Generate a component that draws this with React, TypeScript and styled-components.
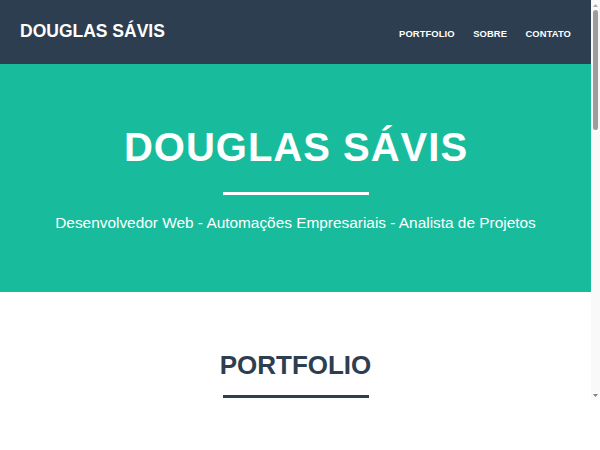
import React from "react";
import styled, { createGlobalStyle } from "styled-components";

const Global = createGlobalStyle`
  html, body { margin: 0; padding: 0; background: #ffffff; }
  body { font-family: "Liberation Sans", Arial, sans-serif; }
  * { box-sizing: border-box; }
`;

const Frame = styled.div`
  display: flex;
  height: 400px;
`;

const Page = styled.div`
  flex: 1;
  min-width: 0;
  overflow: hidden;
  background: #ffffff;
`;

const ScrollBar = styled.div`
  width: 9px;
  flex-shrink: 0;
  background: #f9f9f9;
  display: flex;
  flex-direction: column;
  align-items: center;
`;

const ScrollButton = styled.div`
  height: 10px;
  width: 100%;
  display: flex;
  align-items: center;
  justify-content: center;
  flex-shrink: 0;
`;

const ScrollTrack = styled.div`
  flex: 1;
  width: 100%;
  display: flex;
  justify-content: center;
`;

const Thumb = styled.div`
  width: 5px;
  height: 120px;
  border-radius: 3px;
  background: #9c9c9c;
`;

const NavBar = styled.nav`
  height: 64px;
  background: #2c3e50;
  display: flex;
  align-items: center;
  justify-content: space-between;
  padding: 0 20px;
`;

const Brand = styled.a`
  color: #ffffff;
  font-size: 17.5px;
  line-height: 17.5px;
  font-weight: 700;
  text-decoration: none;
`;

const NavList = styled.ul`
  display: flex;
  gap: 18.5px;
  list-style: none;
  margin: 0;
  padding: 0;
`;

const NavLink = styled.a`
  color: #ffffff;
  font-size: 9.4px;
  line-height: 10px;
  font-weight: 700;
  letter-spacing: 0.1px;
  text-decoration: none;
`;

const Hero = styled.header`
  background: #18bc9c;
  color: #ffffff;
  height: 228px;
  padding-top: 62.5px;
  display: flex;
  flex-direction: column;
  align-items: center;
  text-align: center;
`;

const HeroTitle = styled.h1`
  margin: 0;
  font-size: 40px;
  line-height: 40px;
  font-weight: 700;
  letter-spacing: 1px;
  padding-left: 1px;
`;

const Divider = styled.hr<{ $color: string }>`
  width: 146px;
  height: 3px;
  margin: 0;
  border: none;
  background: ${(p) => p.$color};
  flex-shrink: 0;
`;

const HeroDivider = styled(Divider)`
  margin-top: 25.5px;
`;

const Subtitle = styled.p`
  margin: 20px 0 0;
  font-size: 15.4px;
  line-height: 15.4px;
  font-weight: 400;
`;

const Section = styled.section`
  background: #ffffff;
  color: #2c3e50;
  padding: 59.5px 20px 60px;
  display: flex;
  flex-direction: column;
  align-items: center;
`;

const SectionTitle = styled.h2`
  margin: 0;
  font-size: 26px;
  line-height: 26px;
  font-weight: 700;
`;

const SectionDivider = styled(Divider)`
  margin-top: 17.5px;
`;

const Grid = styled.div`
  margin-top: 40px;
  width: 100%;
  display: grid;
  grid-template-columns: repeat(3, 1fr);
  gap: 20px;
`;

const Card = styled.div`
  height: 140px;
  background: #ecf0f1;
  border-radius: 4px;
`;

const Arrow = ({ up, color }: { up?: boolean; color: string }) => (
  <svg width="5" height="3" viewBox="0 0 5 3">
    <polygon points={up ? "2.5,0 5,3 0,3" : "0,0 5,0 2.5,3"} fill={color} />
  </svg>
);

export default function App() {
  return (
    <>
      <Global />
      <Frame>
        <Page>
          <NavBar>
            <Brand href="#">DOUGLAS SÁVIS</Brand>
            <NavList>
              <li><NavLink href="#portfolio">PORTFOLIO</NavLink></li>
              <li><NavLink href="#sobre">SOBRE</NavLink></li>
              <li><NavLink href="#contato">CONTATO</NavLink></li>
            </NavList>
          </NavBar>
          <Hero>
            <HeroTitle>DOUGLAS SÁVIS</HeroTitle>
            <HeroDivider $color="#ffffff" />
            <Subtitle>Desenvolvedor Web - Automações Empresariais - Analista de Projetos</Subtitle>
          </Hero>
          <Section id="portfolio">
            <SectionTitle>PORTFOLIO</SectionTitle>
            <SectionDivider $color="#2c3e50" />
            <Grid>
              <Card />
              <Card />
              <Card />
            </Grid>
          </Section>
        </Page>
        <ScrollBar>
          <ScrollButton><Arrow up color="#a8a8a8" /></ScrollButton>
          <ScrollTrack><Thumb /></ScrollTrack>
          <ScrollButton><Arrow color="#808080" /></ScrollButton>
        </ScrollBar>
      </Frame>
    </>
  );
}
